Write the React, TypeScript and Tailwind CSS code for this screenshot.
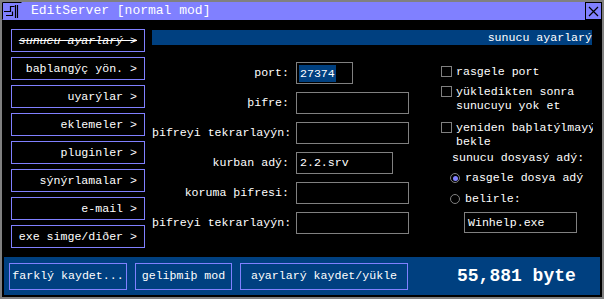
import React from "react"

const menu = [
  "baþlangýç yön. >",
  "uyarýlar >",
  "eklemeler >",
  "pluginler >",
  "sýnýrlamalar >",
  "e-mail >",
  "exe simge/diðer >",
]

const fields = [
  { label: "port:", value: "27374", w: "w-[57px]", selected: true },
  { label: "þifre:", value: "", w: "w-[113px]" },
  { label: "þifreyi tekrarlayýn:", value: "", w: "w-[113px]" },
  { label: "kurban adý:", value: "2.2.srv", w: "w-[97px]" },
  { label: "koruma þifresi:", value: "", w: "w-[113px]" },
  { label: "þifreyi tekrarlayýn:", value: "", w: "w-[113px]" },
]

function Check({ lines }: { lines: string[] }) {
  return (
    <div className="flex gap-[4px]">
      <div className="w-[11px] h-[11px] mt-[1px] border border-[#808080] shrink-0" />
      <div className="flex flex-col">
        {lines.map((l, i) => (
          <span key={i} className="whitespace-nowrap">{l}</span>
        ))}
      </div>
    </div>
  )
}

function Radio({ on, label }: { on?: boolean; label: string }) {
  return (
    <div className="flex items-center gap-[5px] ml-[9px]">
      <div className="w-[10px] h-[10px] rounded-full border border-[#808080] flex items-center justify-center shrink-0">
        {on && <div className="w-[5px] h-[5px] rounded-full bg-[#8080ff]" />}
      </div>
      <span className="whitespace-nowrap">{label}</span>
    </div>
  )
}

export default function App() {
  return (
    <div
      className="w-[604px] h-[299px] bg-[#808080] p-[2px] flex flex-col text-white text-[11.6px] leading-[14px]"
      style={{ fontFamily: '"Liberation Mono", "DejaVu Sans Mono", monospace' }}
    >
      {/* title bar */}
      <div className="h-[18px] bg-[#8080ff] flex items-center shrink-0">
        <svg width="20" height="18" viewBox="0 0 20 18" className="shrink-0">
          <rect x="0" y="0" width="20" height="18" fill="#8080ff" />
          <path d="M0.5 0.5 H19.5 M0.5 0.5 V17.5" stroke="#000" strokeWidth="1" fill="none" />
          <path d="M2 9.5 H8.5 V4.5 H12.5 M4 13.5 H10.5 V9.5 M13.5 3 V16 M15.5 3 V16" stroke="#000" strokeWidth="1.2" fill="none" />
        </svg>
        <span className="ml-[9px] text-[13px] tracking-normal whitespace-nowrap">EditServer [normal mod]</span>
        <div className="ml-auto w-[17px] h-[18px] border border-black flex items-center justify-center">
          <svg width="11" height="11" viewBox="0 0 11 11">
            <path d="M1 1 L10 10 M10 1 L1 10" stroke="#000" strokeWidth="1.2" />
          </svg>
        </div>
      </div>

      {/* main */}
      <div className="flex-1 bg-black flex flex-col">
        <div className="flex h-[237px]">
          {/* left menu */}
          <div className="flex flex-col gap-[5px] pl-[9px] pt-[9px]">
            <div className="w-[134px] h-[23px] border border-[#8080ff] flex items-center justify-end pr-[7px]">
              <span className="italic line-through whitespace-nowrap">sunucu ayarlarý &gt;</span>
            </div>
            {menu.map((m, i) => (
              <div key={i} className="w-[134px] h-[23px] border border-[#8080ff] flex items-center justify-end pr-[7px]">
                <span className="whitespace-nowrap">{m}</span>
              </div>
            ))}
          </div>

          {/* right content */}
          <div className="ml-[7px] pt-[10px] flex flex-col">
            <div className="w-[440px] h-[15px] bg-[#004080] flex items-center justify-end">
              <span>sunucu ayarlarý</span>
            </div>
            <div className="flex">
              {/* form */}
              <div className="flex flex-col gap-[8px] mt-[17px]">
                {fields.map((f, i) => (
                  <div key={i} className="flex items-center h-[22px]">
                    <span className="w-[137px] text-right whitespace-nowrap">{f.label}</span>
                    <div className={`ml-[7px] h-[22px] border border-[#808080] flex items-center ${f.w} px-[2px]`}>
                      {f.value && (
                        <span className={f.selected ? "bg-[#004080] px-[1px] leading-[17px]" : "pl-[1px]"}>{f.value}</span>
                      )}
                    </div>
                  </div>
                ))}
              </div>

              {/* options */}
              <div className="ml-[32px] mt-[20px] w-[152px] overflow-hidden flex flex-col">
                <Check lines={["rasgele port"]} />
                <div className="mt-[6px]">
                  <Check lines={["yükledikten sonra", "sunucuyu yok et"]} />
                </div>
                <div className="mt-[8px]">
                  <Check lines={["yeniden baþlatýlmayý", "bekle"]} />
                </div>
                <span className="mt-[2px] ml-[11px] whitespace-nowrap">sunucu dosyasý adý:</span>
                <div className="mt-[6px]">
                  <Radio on label="rasgele dosya adý" />
                </div>
                <div className="mt-[7px]">
                  <Radio label="belirle:" />
                </div>
                <div className="mt-[6px] ml-[23px] w-[113px] h-[21px] border border-[#808080] flex items-center pl-[3px]">
                  <span>Winhelp.exe</span>
                </div>
              </div>
            </div>
          </div>
        </div>

        {/* bottom bar */}
        <div className="mx-[2px] h-[38px] bg-[#004080] flex items-center pl-[5px]">
          <button className="w-[118px] h-[27px] border border-[#8080ff] flex items-center justify-center whitespace-nowrap">
            farklý kaydet...
          </button>
          <button className="ml-[8px] w-[97px] h-[27px] border border-[#8080ff] flex items-center justify-center whitespace-nowrap">
            geliþmiþ mod
          </button>
          <button className="ml-[8px] w-[168px] h-[27px] border border-[#8080ff] flex items-center justify-center whitespace-nowrap">
            ayarlarý kaydet/yükle
          </button>
          <span className="ml-[49px] text-[18px] font-bold whitespace-nowrap">55,881 byte</span>
        </div>
      </div>
    </div>
  )
}
